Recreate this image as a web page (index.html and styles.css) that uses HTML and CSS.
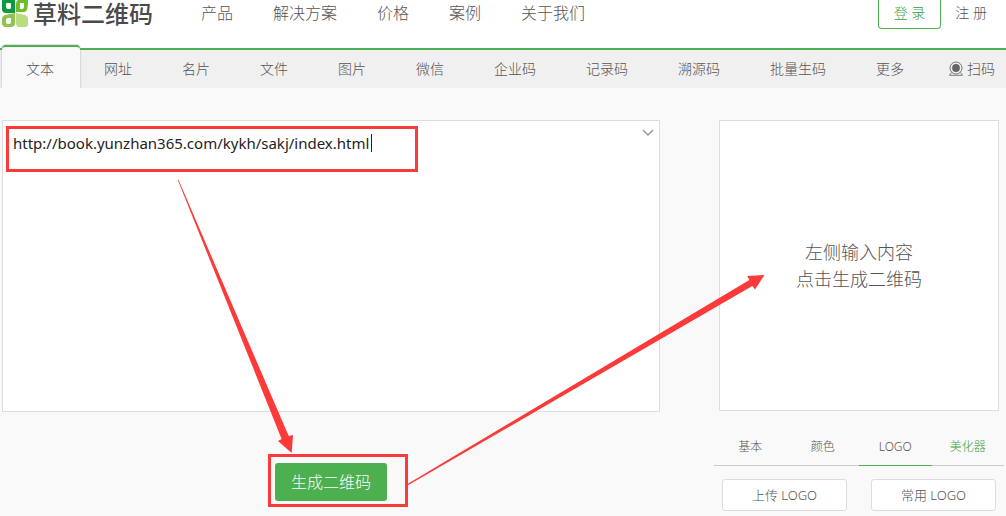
FILE: index.html
```html
<!DOCTYPE html>
<html lang="zh-CN">
<head>
<meta charset="utf-8">
<title>草料二维码</title>
<link rel="stylesheet" href="styles.css">
</head>
<body>
<header class="header">
  <a class="brand" href="#">
    <svg class="brand-mark" viewBox="0 0 27 28" aria-hidden="true">
      <path d="M0 0H13V13H4Q0 13 0 9ZM5 3Q4 3 4 4V7Q4 9 6 9H8Q9 9 9 7V4Q9 3 8 3Z" fill="#0a9b3c" fill-rule="evenodd"/>
      <path d="M16 0H26V4L25 10Q24 12 22 12H14V4Q14 1 16 0ZM18 3V9H20Q22 9 22 7V3Z" fill="#6fbe2d" fill-rule="evenodd"/>
      <path d="M3 15L13 13V23Q13 27 9 27H4Q0 27 0 23V19Q0 16 3 15ZM6 18Q4 18 4 20V22Q4 24 6 24H7Q9 24 9 22V18Z" fill="#91c353" fill-rule="evenodd"/>
      <path d="M14 13L23 15Q26 16 26 19V24Q26 27 23 27H17Q14 27 14 23Z" fill="#bbdb80"/>
    </svg>
    <span class="brand-name">草料二维码</span>
  </a>
  <nav class="site-nav">
    <a href="#">产品</a>
    <a href="#">解决方案</a>
    <a href="#">价格</a>
    <a href="#">案例</a>
    <a href="#">关于我们</a>
  </nav>
  <div class="account">
    <a class="login" href="#">登 录</a>
    <a class="register" href="#">注 册</a>
  </div>
</header>
<nav class="tabs">
  <a class="tab tab-active" href="#">文本</a>
  <a class="tab" href="#">网址</a>
  <a class="tab" href="#">名片</a>
  <a class="tab" href="#">文件</a>
  <a class="tab" href="#">图片</a>
  <a class="tab" href="#">微信</a>
  <a class="tab" href="#">企业码</a>
  <a class="tab" href="#">记录码</a>
  <a class="tab" href="#">溯源码</a>
  <a class="tab" href="#">批量生码</a>
  <a class="tab" href="#">更多</a>
  <a class="scan" href="#">
    <svg class="scan-icon" viewBox="0 0 16 16" aria-hidden="true">
      <circle cx="8" cy="7" r="6" fill="none" stroke="#777" stroke-width="1"/>
      <circle cx="8" cy="7" r="3.9" fill="#666"/>
      <path d="M3.500 11.500L1.500 14.300H14.500L12.500 11.500" fill="none" stroke="#777" stroke-width="1"/>
    </svg>
    <span>扫码</span>
  </a>
</nav>
<main class="main">
  <section class="editor">
    <div class="editor-box">
      <textarea class="editor-input" aria-label="文本内容" spellcheck="false">http://book.yunzhan365.com/kykh/sakj/index.html</textarea>
      <button class="expand" type="button" aria-label="展开">
        <svg class="expand-icon" viewBox="0 0 12 8" aria-hidden="true"><path d="M1 1L6 6L11 1" fill="none" stroke="#999" stroke-width="1.5"/></svg>
      </button>
    </div>
    <button class="generate" type="button">生成二维码</button>
  </section>
  <aside class="side">
    <div class="preview">
      <p>左侧输入内容</p>
      <p>点击生成二维码</p>
    </div>
    <nav class="options">
      <a class="option" href="#">基本</a>
      <a class="option" href="#">颜色</a>
      <a class="option option-active" href="#">LOGO</a>
      <a class="option option-accent" href="#">美化器</a>
    </nav>
    <div class="logo-actions">
      <button class="logo-button" type="button">上传 LOGO</button>
      <button class="logo-button" type="button">常用 LOGO</button>
    </div>
  </aside>
</main>
<svg class="marks" width="1006" height="516" viewBox="0 0 1006 516" aria-hidden="true">
  <g fill="none" stroke="#fc3a3a" stroke-width="3">
    <rect x="7.500" y="127.500" width="409" height="43"/>
    <rect x="269.500" y="455.500" width="137" height="50"/>
  </g>
  <g fill="#fc3a3a">
    <path d="M177.800 180H178.600L288.700 436L293 435L291.700 453L278 441L281.600 439Z"/>
    <path d="M407.500 484L749.300 280L747.300 276L764.500 275L755 289.500L752.300 286L408 485.300Z"/>
  </g>
  <path d="M371.500 134V152" stroke="#222" stroke-width="1"/>
</svg>
</body>
</html>
```
FILE: styles.css
```css
* {
  box-sizing: border-box;
}

body {
  margin: 0;
  background: #f9f9f9;
  color: #555;
  font: 300 14px/20px "Noto Sans", "Noto Sans CJK SC", sans-serif;
}

a {
  color: inherit;
  text-decoration: none;
}

button,
textarea {
  font: inherit;
  color: inherit;
}

.header {
  display: flex;
  align-items: flex-start;
  height: 48px;
  padding: 0 19px 0 2px;
  background: #fff;
}

.brand {
  display: flex;
  gap: 4px;
  width: 199px;
}

.brand-mark {
  width: 27px;
  height: 28px;
}

.brand-name {
  color: #4a4a4a;
  font-size: 24px;
  font-weight: 500;
  line-height: 27px;
}

.site-nav {
  display: flex;
  gap: 40px;
  font-size: 16px;
  line-height: 27px;
}

.account {
  display: flex;
  gap: 14px;
  margin-left: auto;
  line-height: 25px;
}

.login {
  height: 29px;
  padding: 0 15px;
  border: 1px solid #4caf50;
  border-top: 0;
  border-radius: 0 0 4px 4px;
  color: #3a9f3e;
}

.tabs {
  display: flex;
  align-items: flex-end;
  height: 40px;
  padding: 0 11px 0 1px;
  border-top: 2px solid #4caf50;
  background: #f0f0f0;
}

.tab {
  padding: 0 25px;
  line-height: 37px;
}

.tab:not(.tab-active) {
  height: 38px;
}

.tab-active {
  height: 43px;
  margin: 0 -1px 0 1px;
  padding: 0 26px 0 24px;
  border-top: 2px solid #4caf50;
  border-radius: 4px 4px 0 0;
  background: #f9f9f9;
  box-shadow: 0 0 2px #999;
  line-height: 44px;
  clip-path: inset(-2px -3px 0 -3px);
}

.scan {
  display: flex;
  align-items: center;
  gap: 3px;
  height: 38px;
  margin-left: auto;
}

.scan-icon {
  width: 16px;
  height: 16px;
}

.main {
  display: grid;
  grid-template-columns: 1fr 290px;
  gap: 54px;
  padding: 32px 2px 0;
}

.editor {
  display: flex;
  flex-direction: column;
  gap: 51px;
}

.editor-box {
  display: flex;
  align-items: flex-start;
  height: 292px;
  border: 1px solid #ddd;
  background: #fff;
}

.editor-input {
  flex: 1;
  height: 100%;
  padding: 12px 10px;
  border: 0;
  outline: 0;
  resize: none;
  background: transparent;
  color: #222;
  font-size: 15px;
  font-weight: 400;
  line-height: 20px;
}

.expand {
  display: flex;
  padding: 8px 5px;
  border: 0;
  background: transparent;
}

.expand-icon {
  width: 12px;
  height: 8px;
}

.generate {
  align-self: flex-start;
  height: 38px;
  margin-left: 273px;
  padding: 0 16px;
  border: 0;
  border-radius: 3px;
  background: #4caf50;
  color: #fff;
  font-size: 16px;
}

.preview {
  display: flex;
  flex-direction: column;
  justify-content: center;
  height: 291px;
  margin: 0 5px;
  border: 1px solid #ddd;
  background: #fff;
  font-size: 18px;
  line-height: 27px;
  text-align: center;
}

.preview p {
  margin: 0;
}

.options {
  display: grid;
  grid-template-columns: repeat(4, 1fr);
  margin-top: 17px;
  font-size: 12px;
  line-height: 37px;
  text-align: center;
}

.option {
  border-bottom: 1px solid #ccc;
}

.option-active {
  border-color: #4caf50;
}

.option-accent {
  color: #3a9f3e;
}

.logo-actions {
  display: grid;
  grid-template-columns: 1fr 1fr;
  gap: 24px;
  padding: 13px 8px 0;
}

.logo-button {
  height: 32px;
  padding: 0;
  border: 1px solid #ddd;
  border-radius: 3px;
  background: #fff;
  font-size: 13px;
}

.marks {
  position: absolute;
  top: 0;
  left: 0;
  pointer-events: none;
}
```
